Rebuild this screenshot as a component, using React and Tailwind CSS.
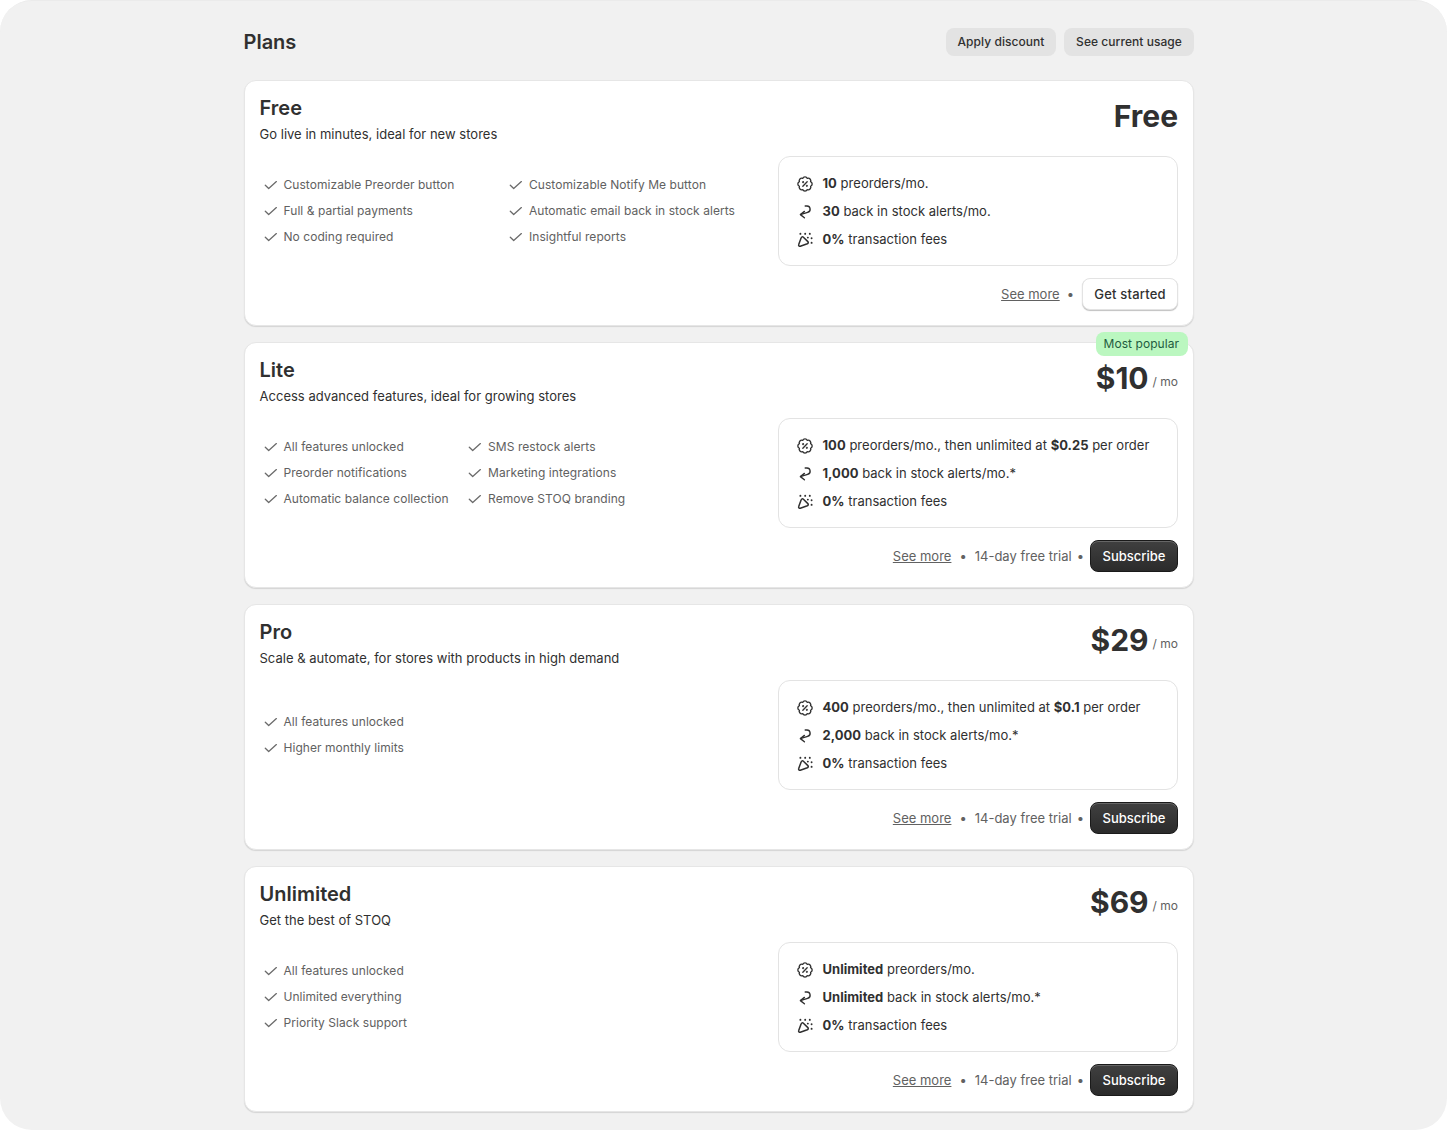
import React from 'react';

const plans = [
  {
    name: 'Free',
    blurb: 'Go live in minutes, ideal for new stores',
    price: 'Free',
    columns: [
      ['Customizable Preorder button', 'Full & partial payments', 'No coding required'],
      ['Customizable Notify Me button', 'Automatic email back in stock alerts', 'Insightful reports'],
    ],
    columnClass: 'grid grid-cols-2 gap-[15.5px] w-fit',
    limits: [
      <><b className="font-bold">10</b> preorders/mo.</>,
      <><b className="font-bold">30</b> back in stock alerts/mo.</>,
    ],
    action: 'Get started',
  },
  {
    name: 'Lite',
    blurb: 'Access advanced features, ideal for growing stores',
    price: '$10',
    popular: true,
    columns: [
      ['All features unlocked', 'Preorder notifications', 'Automatic balance collection'],
      ['SMS restock alerts', 'Marketing integrations', 'Remove STOQ branding'],
    ],
    columnClass: 'flex gap-[15.5px]',
    limits: [
      <><b className="font-bold">100</b> preorders/mo., then unlimited at <b className="font-bold">$0.25</b> per order</>,
      <><b className="font-bold">1,000</b> back in stock alerts/mo.*</>,
    ],
    action: 'Subscribe',
  },
  {
    name: 'Pro',
    blurb: 'Scale & automate, for stores with products in high demand',
    price: '$29',
    columns: [['All features unlocked', 'Higher monthly limits']],
    columnClass: 'flex gap-[15.5px]',
    limits: [
      <><b className="font-bold">400</b> preorders/mo., then unlimited at <b className="font-bold">$0.1</b> per order</>,
      <><b className="font-bold">2,000</b> back in stock alerts/mo.*</>,
    ],
    action: 'Subscribe',
  },
  {
    name: 'Unlimited',
    blurb: 'Get the best of STOQ',
    price: '$69',
    columns: [['All features unlocked', 'Unlimited everything', 'Priority Slack support']],
    columnClass: 'flex gap-[15.5px]',
    limits: [
      <><b className="font-bold">Unlimited</b> preorders/mo.</>,
      <><b className="font-bold">Unlimited</b> back in stock alerts/mo.*</>,
    ],
    action: 'Subscribe',
  },
];

const CheckIcon = () => (
  <svg width="20" height="20" viewBox="0 0 20 20" fill="none" stroke="#6b6b6b" strokeWidth="1.3" strokeLinecap="round" strokeLinejoin="round" className="shrink-0">
    <path d="M5.3 10.2l3.4 3.3 7.7-6.9" />
  </svg>
);

const DiscountIcon = () => (
  <svg width="16" height="16" viewBox="0.6 0.6 14.8 14.8" fill="none" stroke="#303030" strokeWidth="1.25" strokeLinecap="round" strokeLinejoin="round" className="shrink-0 -mt-px">
    <path d="M13.17 5.86A2.3 2.3 0 0 1 13.17 10.14A2.3 2.3 0 0 1 10.14 13.17A2.3 2.3 0 0 1 5.86 13.17A2.3 2.3 0 0 1 2.83 10.14A2.3 2.3 0 0 1 2.83 5.86A2.3 2.3 0 0 1 5.86 2.83A2.3 2.3 0 0 1 10.14 2.83A2.3 2.3 0 0 1 13.17 5.86Z" />
    <path d="M10 6l-4 4" />
    <circle cx="6.3" cy="6.3" r=".35" fill="#303030" />
    <circle cx="9.7" cy="9.7" r=".35" fill="#303030" />
  </svg>
);

const ReturnIcon = () => (
  <svg width="16" height="16" viewBox="0 0 16 16" fill="none" stroke="#303030" strokeWidth="1.4" strokeLinecap="round" strokeLinejoin="round" className="shrink-0">
    <path d="M8.2 2h1.6a3.2 3.2 0 0 1 .9 6.3L4 10.4" />
    <path d="M7.4 7.4 3.4 10.6l4 3.2" />
  </svg>
);

const PartyIcon = () => (
  <svg width="16" height="16" viewBox="0 0 16 16" fill="none" stroke="#303030" strokeWidth="1.5" strokeLinecap="round" strokeLinejoin="round" className="shrink-0">
    <path d="M4.2 5.8 1.7 12.6c-.4 1 .6 2 1.6 1.6l7-2.4c1-.4 1.3-1.5.6-2.2L6.4 5.2c-.7-.7-1.9-.4-2.2.6z" />
    <path d="M3.4 1.8v.1M8.2 1.8v.1M12.8 1.8v.1M14.6 6.2v.1M14.6 10.8v.1M10.8 5.6h.1" strokeWidth="1.9" />
  </svg>
);

const Feature = ({ text }) => (
  <div className="flex items-center gap-1 h-[26px]">
    <CheckIcon />
    <span className="text-xs text-[#616161] tracking-[0.05px] whitespace-nowrap">{text}</span>
  </div>
);

const LimitRow = ({ icon, children }) => (
  <div className="flex items-center gap-[9.5px] h-7 text-[13px] tracking-[0.02px] text-[#303030]">
    {icon}
    <span>{children}</span>
  </div>
);

const PlanCard = ({ plan }) => (
  <div className="relative bg-white rounded-xl border border-[#e6e6e6] shadow-[0_1px_1px_rgba(0,0,0,0.12)] pl-[14.5px] pr-[15px] pt-[13px] pb-[14px] h-[246px]">
    {plan.popular && (
      <span className="absolute right-[5px] -top-[11px] bg-[#bbf7c0] text-[#1f5c3f] text-xs leading-none rounded-lg pl-2 pr-[9px] py-[6px] h-6 tracking-[0.05px]">
        Most popular
      </span>
    )}
    <div className="flex justify-between items-start h-[62px]">
      <div>
        <h2 className="text-xl leading-7 font-semibold text-[#303030]">{plan.name}</h2>
        <p className="text-[13px] leading-5 mt-[2px] tracking-[0.02px] text-[#303030]">{plan.blurb}</p>
      </div>
      <div className="flex items-center gap-1 mt-[2px] text-[#303030]">
        <span className="text-[30px] leading-10 font-bold">{plan.price}</span>
        {plan.price !== 'Free' && <span className="text-xs mt-2 text-[#616161]">/ mo</span>}
      </div>
    </div>
    <div className="flex items-center justify-between">
      <div className={plan.columnClass}>
        {plan.columns.map((col, i) => (
          <div key={i}>
            {col.map((text) => <Feature key={text} text={text} />)}
          </div>
        ))}
      </div>
      <div className="w-[400px] h-[110px] rounded-xl border border-[#e3e3e3] px-[18px] py-[13px]">
        <LimitRow icon={<DiscountIcon />}>{plan.limits[0]}</LimitRow>
        <LimitRow icon={<ReturnIcon />}>{plan.limits[1]}</LimitRow>
        <LimitRow icon={<PartyIcon />}><b className="font-bold">0%</b> transaction fees</LimitRow>
      </div>
    </div>
    <div className="flex items-center justify-end mt-3 h-8 text-[13px] text-[#616161]">
      <a className="underline mt-[2px]">See more</a>
      {plan.action === 'Subscribe' ? (
        <>
          <span className="mx-2 mt-[2px]">•</span>
          <span className="mt-[2px]">14-day free trial</span>
          <span className="ml-[5px] mr-[6px] mt-[2px]">•</span>
          <button className="h-8 w-[88px] pt-[2px] rounded-lg bg-gradient-to-b from-[#404040] to-[#2b2b2b] border border-[#1a1a1a] text-white font-medium shadow-[inset_0_1px_0_rgba(255,255,255,0.2)]">
            {plan.action}
          </button>
        </>
      ) : (
        <>
          <span className="mx-[7px] mt-[2px]">•</span>
          <button className="ml-[1px] h-8 w-[96px] pt-[2px] rounded-lg bg-white border border-[#e3e3e3] text-[#303030] font-medium tracking-[0.2px] shadow-[0_1px_1px_rgba(0,0,0,0.25)]">
            {plan.action}
          </button>
        </>
      )}
    </div>
  </div>
);

const App = () => (
  <div className="bg-white font-['Inter',sans-serif]">
    <div className="w-[1447px] h-[1130px] bg-[#f1f1f1] rounded-[32px] border-t border-[#ebebeb] overflow-hidden">
      <div className="w-[950px] ml-[244px]">
        <div className="flex items-center justify-between h-7 mt-[27px] mb-[25px]">
          <h1 className="text-xl font-semibold text-[#303030] -ml-[0.5px]">Plans</h1>
          <div className="flex gap-2">
            <button className="h-7 w-[110px] rounded-lg bg-[#e3e3e3] text-xs font-medium tracking-[0.05px] text-[#303030]">Apply discount</button>
            <button className="h-7 w-[130px] rounded-lg bg-[#e3e3e3] text-xs font-medium tracking-[0.05px] text-[#303030]">See current usage</button>
          </div>
        </div>
        <div className="flex flex-col gap-4 -mt-px">
          {plans.map((plan) => <PlanCard key={plan.name} plan={plan} />)}
        </div>
      </div>
    </div>
  </div>
);

export default App;
